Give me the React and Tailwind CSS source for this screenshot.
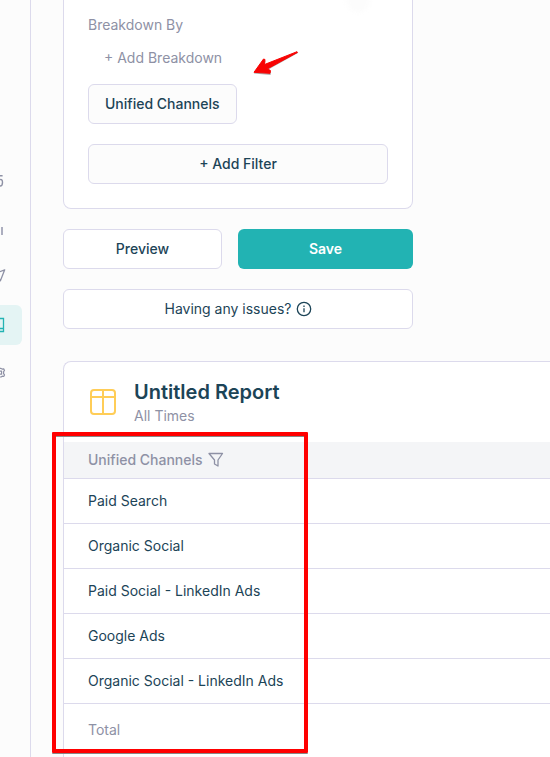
import React from "react";

const channels = [
  "Paid Search",
  "Organic Social",
  "Paid Social - LinkedIn Ads",
  "Google Ads",
  "Organic Social - LinkedIn Ads",
];

function Sidebar() {
  return (
    <nav
      aria-label="Main"
      className="flex w-[31px] shrink-0 flex-col items-start border-r border-[#dcdaec] pt-[161px] text-[#8e91a5]"
    >
      <a href="#home" aria-label="Home" className="flex h-10 w-[22px] items-center">
        <svg width="8" height="16" viewBox="0 0 8 16" fill="none" stroke="currentColor" strokeWidth="1.4" aria-hidden="true">
          <path d="M0 2.700h2.600M0 6.600c1.700-.5 2.500.6 2.500 2.900S1.600 13 0 13" />
        </svg>
      </a>
      <a href="#analytics" aria-label="Analytics" className="mt-2 flex h-10 w-[22px] items-center">
        <svg width="8" height="16" viewBox="0 0 8 16" fill="none" stroke="#acaebf" strokeWidth="2" aria-hidden="true">
          <path d="M2 6v8" />
        </svg>
      </a>
      <a href="#campaigns" aria-label="Campaigns" className="mt-2 flex h-10 w-[22px] items-center">
        <svg width="8" height="16" viewBox="0 0 8 16" fill="none" stroke="currentColor" strokeWidth="1.300" strokeLinejoin="round" aria-hidden="true">
          <path d="M-5 4.500 4.700.8.400 11.800-2 7.500" />
        </svg>
      </a>
      <a
        href="#reports"
        aria-label="Reports"
        aria-current="page"
        className="mt-2 flex h-10 w-[22px] items-center rounded-r-md bg-[#e4f4f4] text-[#23b3b3]"
      >
        <svg width="8" height="16" viewBox="0 0 8 16" fill="none" stroke="currentColor" strokeWidth="1.3" aria-hidden="true">
          <path d="M-1 1.500h4.500v13H-1M-1 11.500h4.500" />
        </svg>
      </a>
      <a href="#settings" aria-label="Settings" className="mt-2 flex h-10 w-[22px] items-center">
        <svg width="8" height="16" viewBox="0 0 8 16" fill="none" stroke="currentColor" strokeWidth="1.2" strokeLinejoin="round" aria-hidden="true">
          <path d="M-1 3.400H1L2.200 4.100 3.700 3.800 4.500 5.400 3.600 6.600V8.600L4.500 9.900 3.700 11.500 2.200 11.200 1 12H-1M0 6.200H1.600V9.200H0" />
        </svg>
      </a>
    </nav>
  );
}

function BreakdownCard() {
  return (
    <section className="relative rounded-b-lg border border-t-0 border-[#dcdaec] bg-white px-6 pt-[15px] pb-6">
      <div className="absolute -top-3 right-[42px] size-6 rounded-full bg-[#fcfcfc] blur-[2px]" />
      <h2 className="text-[#8e91a5]">Breakdown By</h2>
      <button className="mt-[13px] block px-4 text-[#8e91a5]">+ Add Breakdown</button>
      <button className="mt-4 block h-10 rounded-md border border-[#dcdaec] bg-[#fcfcfc] px-4 font-medium">
        Unified Channels
      </button>
      <button className="mt-5 block h-10 w-full rounded-md border border-[#dcdaec] bg-[#fcfcfc] font-medium">
        + Add Filter
      </button>
      <svg
        className="absolute top-[50px] left-[188px]"
        width="48"
        height="27"
        viewBox="0 0 48 27"
        aria-hidden="true"
      >
        <path
          d="M2 23.500 12 10l1.500 1.200-1 3.500L45.500 2l.5 1L15.500 20l3.500 2-.5 3Z"
          fill="#777"
          opacity=".6"
        />
        <path
          d="M2 22.300 11.500 9l1.500.5-.5 5L45 1.700l.5.7L15.500 18.800l3 1.800-.5 2.700Z"
          fill="#f80404"
          stroke="#f80404"
          strokeLinejoin="round"
        />
      </svg>
    </section>
  );
}

function Report() {
  return (
    <section className="relative mt-8 flex grow flex-col rounded-tl-lg border-t border-l border-[#dcdaec] bg-white">
      <header className="flex items-center gap-4 px-6 pt-4 pb-4">
        <svg width="30" height="30" viewBox="0 0 30 30" fill="none" stroke="#ffcd57" strokeWidth="2" className="shrink-0" aria-hidden="true">
          <rect x="3" y="3" width="24" height="24" rx="3" />
          <path d="M3 10h24M15 3v24" />
        </svg>
        <div>
          <h1 className="text-xl leading-7 font-semibold">Untitled Report</h1>
          <p className="text-[#8e91a5]">All Times</p>
        </div>
      </header>
      <table className="w-full text-left">
        <thead>
          <tr className="h-9 bg-[#f4f5f7] text-[#8e91a5]">
            <th className="px-6 font-medium">
              <span className="flex items-center gap-1">
                Unified Channels
                <button aria-label="Filter channels">
                  <svg width="18" height="18" viewBox="0 0 18 18" fill="none" stroke="currentColor" strokeWidth="1.300" strokeLinejoin="round" aria-hidden="true">
                    <path d="M2 2.500h13.500L11 9v6l-3.500-2V9Z" />
                  </svg>
                </button>
              </span>
            </th>
          </tr>
        </thead>
        <tbody>
          {channels.map((name) => (
            <tr key={name} className="h-[45px] border-y border-[#dcdaec]">
              <td className="px-6">{name}</td>
            </tr>
          ))}
        </tbody>
        <tfoot>
          <tr className="h-[54px] text-[#8e91a5]">
            <td className="px-6">Total</td>
          </tr>
        </tfoot>
      </table>
      <div className="pointer-events-none absolute top-[70px] -left-3 h-[321px] w-64 rounded-[1px] border-4 border-[#ff0000] shadow-[0_1px_0_#888,inset_0_1px_0_#888]" />
    </section>
  );
}

export default function App() {
  return (
    <div className="flex min-h-screen overflow-hidden bg-[#fcfcfc] font-['Inter',sans-serif] text-sm text-[#1c4457]">
      <Sidebar />
      <main className="flex min-w-0 grow flex-col pl-8">
        <div className="w-full max-w-[350px]">
          <BreakdownCard />
          <div className="mt-5 flex gap-4">
            <button className="h-10 grow rounded-md border border-[#dcdaec] bg-white font-medium">Preview</button>
            <button className="h-10 w-1/2 rounded-md bg-[#22b3b3] font-semibold text-white">Save</button>
          </div>
          <button className="mt-5 flex h-10 w-full items-center justify-center gap-1 rounded-md border border-[#dcdaec] bg-white">
            Having any issues?
            <svg width="16" height="16" viewBox="0 0 16 16" fill="none" stroke="currentColor" strokeWidth="1.300" aria-hidden="true">
              <circle cx="8" cy="8" r="6.700" />
              <path d="M8 7.200v4M8 4.500V6" />
            </svg>
          </button>
        </div>
        <Report />
      </main>
    </div>
  );
}
